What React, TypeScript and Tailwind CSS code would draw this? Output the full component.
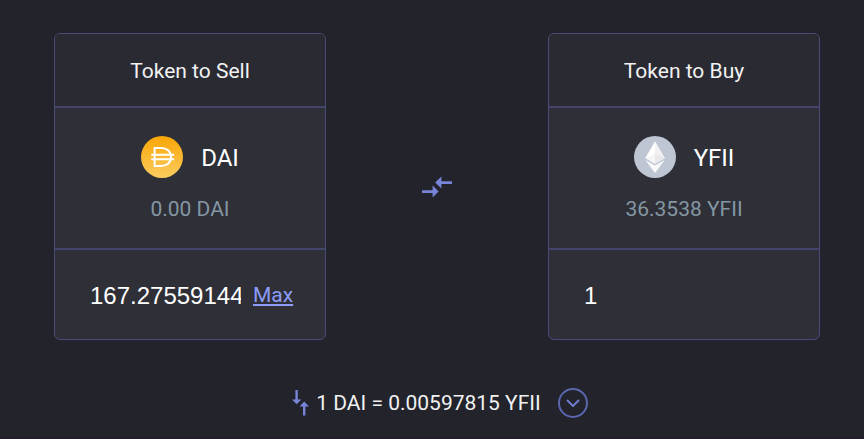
import React, { useState } from 'react';

const CARD = 'w-[272px] shrink-0 overflow-hidden rounded-md border border-[#474b75] bg-[#2f2f38]';
const CARD_HEADER = 'flex h-[74px] items-center justify-center border-b-2 border-[#41456a] bg-[#2a2a33] pt-1 text-[21px] text-[#f2f2f2]';
const CARD_BODY = 'flex h-[142px] flex-col items-center border-b-2 border-[#41456a] pt-7';
const AMOUNT_INPUT = "w-[151px] min-w-0 bg-transparent font-['Liberation_Sans',sans-serif] text-2xl text-white outline-none";

function DaiIcon() {
    return (
        <svg viewBox="0 0 42 42" className="size-[42px]" aria-hidden="true">
            <defs>
                <linearGradient id="daiFill" x1="0" y1="0" x2="0" y2="1">
                    <stop offset="0" stopColor="#f9a606" />
                    <stop offset="1" stopColor="#fbcc5f" />
                </linearGradient>
            </defs>
            <circle cx="21" cy="21" r="21" fill="url(#daiFill)" />
            <path
                d="M13.6 12h6.6c6 0 9.8 3.8 9.8 9s-3.8 9-9.8 9h-6.6zM10.2 18.8h23M10.2 23.2h23"
                fill="none"
                stroke="#fff"
                strokeWidth="2"
            />
        </svg>
    );
}

function EthIcon() {
    return (
        <svg viewBox="0 0 42 42" className="size-[42px]" aria-hidden="true">
            <circle cx="21" cy="21" r="21" fill="#bec5d3" />
            <path d="M21 5.5 11.3 22 21 27.8 30.7 22z" fill="#fff" />
            <path d="M21 5.5V27.8L30.7 22z" fill="#f1f1f1" />
            <path d="M21 17.6 11.3 22 21 27.8z" fill="#f6f6f7" />
            <path d="M21 17.6V27.8L30.7 22z" fill="#e9e9eb" />
            <path d="M11.3 24 21 37 30.7 24 21 29.6z" fill="#fafafa" />
        </svg>
    );
}

// Two opposite arrows, the right one sits above the left one
function SwapArrows({ className }: { className: string }) {
    return (
        <svg viewBox="0 0 30 22" className={className} fill="#7884d8" aria-hidden="true">
            <path d="M0 14.2h10.6V9.6L16.6 15.6 10.6 21.6V17H0z" />
            <path d="M30 5.2H19.4V.4L13.2 6.6 19.4 12.6V8H30z" />
        </svg>
    );
}

interface TokenCardProps {
    title: string;
    symbol: string;
    balance: string;
    icon: React.ReactNode;
    initialAmount: string;
    showMax?: boolean;
}

function TokenCard({ title, symbol, balance, icon, initialAmount, showMax }: TokenCardProps) {
    const [amount, setAmount] = useState(initialAmount);

    return (
        <section className={CARD}>
            <h2 className={CARD_HEADER}>{title}</h2>
            <div className={CARD_BODY}>
                <div className="flex items-center gap-[18px]">
                    {icon}
                    <span className="pt-px text-2xl text-white">{symbol}</span>
                </div>
                <p className="mt-4 text-[21px] leading-[30px] text-[#8497a3]">{balance}</p>
            </div>
            <div className="flex h-[89px] items-center gap-3 pt-0.5 pl-[35px]">
                <input
                    className={AMOUNT_INPUT}
                    aria-label={title}
                    value={amount}
                    onChange={(e) => setAmount(e.target.value)}
                />
                {showMax && (
                    <button type="button" className="text-[21px] text-[#8c9cf8] underline">
                        Max
                    </button>
                )}
            </div>
        </section>
    );
}

export default function App() {
    return (
        <main className="flex min-h-screen flex-col border-b-2 border-[#231a2a] bg-[#23232c] pt-[33px] pr-11 pl-[54px] font-['Roboto',sans-serif]">
            <div className="flex items-center justify-between">
                <TokenCard
                    title="Token to Sell"
                    symbol="DAI"
                    balance="0.00 DAI"
                    icon={<DaiIcon />}
                    initialAmount="167.27559144"
                    showMax
                />
                <button type="button" aria-label="Swap tokens">
                    <SwapArrows className="h-[22px] w-[30px]" />
                </button>
                <TokenCard
                    title="Token to Buy"
                    symbol="YFII"
                    balance="36.3538 YFII"
                    icon={<EthIcon />}
                    initialAmount="1"
                />
            </div>

            <div className="mt-[47px] flex items-center justify-center gap-[7px] pl-1.5 text-[21px] text-[#f2f2f2]">
                <svg viewBox="0 0 17 26" className="h-[26px] w-[17px]" fill="#7884d8" aria-hidden="true">
                    <path d="M3.4 0h2.4v9.4h3.6L4.6 14.2 0 9.4h3.4z" />
                    <path d="M11 25.4h2.4V16.4h3.6L12.2 11.4 7.6 16.4H11z" />
                </svg>
                <span className="pt-px">1 DAI = 0.00597815 YFII</span>
                <button
                    type="button"
                    aria-label="Show rate details"
                    className="ml-2.5 flex size-[30px] items-center justify-center rounded-full border-2 border-[#5a66ae]"
                >
                    <svg viewBox="0 0 14 8" className="h-2 w-3.5" fill="none" stroke="#6f7ccb" strokeWidth="2" aria-hidden="true">
                        <path d="M1 1l6 6 6-6" />
                    </svg>
                </button>
            </div>
        </main>
    );
}
